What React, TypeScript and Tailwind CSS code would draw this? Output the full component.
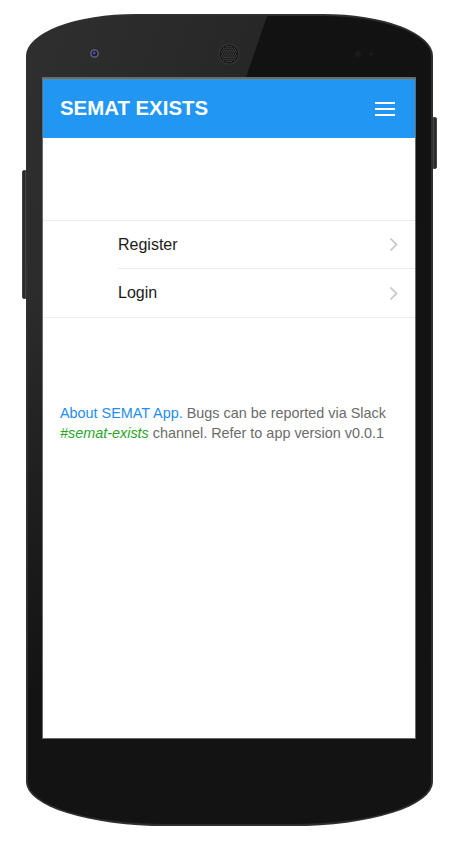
import React from "react";

function Speaker() {
  const dots: { x: number; y: number }[] = [];
  for (let i = -4; i <= 4; i++) {
    for (let j = -4; j <= 4; j++) {
      const x = i * 2.1 + (j % 2 ? 1.05 : 0);
      const y = j * 1.9;
      if (x * x + y * y < 64) dots.push({ x, y });
    }
  }
  return (
    <svg width="22" height="22" viewBox="-11 -11 22 22">
      <circle r="10.5" fill="#3a3a3a" />
      <circle r="9.5" fill="#161616" />
      {dots.map((d, k) => (
        <circle key={k} cx={d.x} cy={d.y} r="0.75" fill="#4a4a4a" />
      ))}
    </svg>
  );
}

function Camera() {
  return (
    <svg width="9" height="9" viewBox="-4.5 -4.5 9 9">
      <circle r="4.3" fill="#6b6b78" />
      <circle r="3" fill="#1b1b3a" />
      <circle r="1.5" cx="-0.3" cy="-0.5" fill="#4a4ab0" />
    </svg>
  );
}

function Chevron() {
  return (
    <svg width="9" height="15" viewBox="0 0 9 15" fill="none">
      <path d="M1.5 1.5 L7.5 7.5 L1.5 13.5" stroke="#c4c4c8" strokeWidth="1.7" />
    </svg>
  );
}

function Hamburger() {
  return (
    <div className="flex flex-col gap-[4px] w-[20px]">
      <span className="h-[2px] bg-white" />
      <span className="h-[2px] bg-white" />
      <span className="h-[2px] bg-white" />
    </div>
  );
}

export default function App() {
  const items = ["Register", "Login"];

  return (
    <main className="w-[463px] h-[842px] bg-white overflow-hidden font-['Liberation_Sans',Arial,sans-serif]">
      <div className="pt-[14px] pl-[26px]">
        {/* Phone body */}
        <div className="relative w-[407px] h-[812px] rounded-t-[110px_42px] rounded-b-[140px_44px] border-2 border-[#2f2f2f] bg-[linear-gradient(to_bottom,transparent_35%,#131313_85%),linear-gradient(109deg,#2f2f2f_0%,#272727_35%,#121212_35.2%,#131313_100%)] pt-[62px] pl-[15px] pr-[16px]">
          {/* Side buttons */}
          <div className="absolute left-[-6px] top-[154px] w-[4px] h-[129px] rounded-l-[2px] bg-[#2b2b2b] border border-[#444]" />
          <div className="absolute right-[-6px] top-[101px] w-[4px] h-[52px] rounded-r-[2px] bg-[#2b2b2b] border border-[#444]" />

          {/* Top sensors */}
          <div className="absolute top-[33px] left-[62px]">
            <Camera />
          </div>
          <div className="absolute top-[27px] left-[190px]">
            <Speaker />
          </div>
          <div className="absolute top-[35px] left-[327px] flex items-center gap-[8px]">
            <span className="w-[6px] h-[6px] rounded-full bg-[#1b1b1b]" />
            <span className="w-[4px] h-[4px] rounded-full bg-[#1d1d1d]" />
          </div>

          {/* Screen */}
          <div className="w-[372px] h-[660px] bg-white flex flex-col border-t border-[#8a6b2c] shadow-[0_0_0_1px_#6a6a6a]">
            <header className="h-[59px] bg-[#2196f3] flex items-center justify-between pl-[17px] pr-[20px]">
              <h1 className="text-white text-[20.4px] font-bold leading-none">SEMAT EXISTS</h1>
              <Hamburger />
            </header>

            <ul className="mt-[82px] border-t border-b border-[#ececec]">
              {items.map((item, i) => (
                <li key={item} className="pl-[75px]">
                  <div
                    className={`h-[48px] flex items-center justify-between pr-[17px] ${
                      i < items.length - 1 ? "border-b border-[#ececec]" : ""
                    }`}
                  >
                    <span className="text-[16px] text-[#1a1a1a]">{item}</span>
                    <Chevron />
                  </div>
                </li>
              ))}
            </ul>

            <p className="mt-[85px] px-[17px] text-[14.4px] leading-[20px] text-[#6b6b6b]">
              <span className="text-[#1e8ef0]">About SEMAT App.</span> Bugs can be reported via Slack{" "}
              <span className="italic text-[#2aa52a]">#semat-exists</span> channel. Refer to app version v0.0.1
            </p>
          </div>
        </div>
      </div>
    </main>
  );
}
